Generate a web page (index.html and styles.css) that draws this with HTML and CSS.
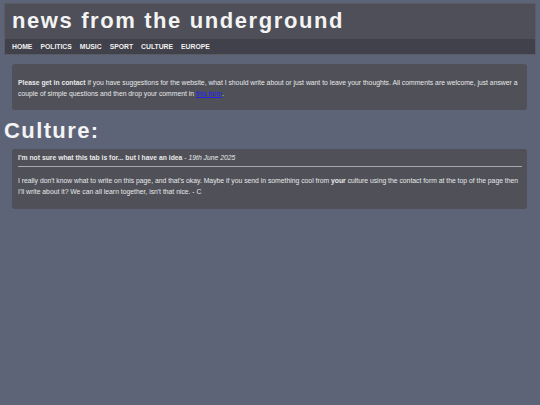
FILE: index.html
```html
<!DOCTYPE html>
<html>
<head>
<meta charset="utf-8">
<link rel="stylesheet" href="styles.css">
</head>
<body>
<header class="masthead">
  <h1 class="site-title">news from the underground</h1>
  <nav class="nav">
    <a class="nav-item" href="#">HOME</a>
    <a class="nav-item" href="#">POLITICS</a>
    <a class="nav-item" href="#">MUSIC</a>
    <a class="nav-item" href="#">SPORT</a>
    <a class="nav-item" href="#">CULTURE</a>
    <a class="nav-item" href="#">EUROPE</a>
  </nav>
</header>
<section class="box contact">
  <p><b>Please get in contact</b> if you have suggestions for the website, what I should write about or just want to leave your thoughts. All comments are welcome, just answer a couple of simple questions and then drop your comment in <a class="link" href="#">this form</a>.</p>
</section>
<h2 class="page-title">Culture:</h2>
<article class="box post">
  <div class="post-head"><b>I'm not sure what this tab is for... but I have an idea</b> - <i>19th June 2025</i></div>
  <hr class="rule">
  <p class="post-body">I really don't know what to write on this page, and that's okay. Maybe if you send in something cool from <b>your</b> culture using the contact form at the top of the page then I'll write about it? We can all learn together, isn't that nice. - C</p>
</article>
</body>
</html>
```
FILE: styles.css
```css
html, body {
  margin: 0;
  padding: 0;
}
body {
  background: #5e6477;
  font-family: "Liberation Sans", Arial, sans-serif;
  color: #ececec;
  padding: 3px 4px;
  min-height: 405px;
  box-sizing: border-box;
}
.masthead {
  background: #4e4f58;
  border: 1px solid #5a5b64;
}
.site-title {
  margin: 0;
  padding: 4px 7px 6px;
  font-size: 22px;
  line-height: 25px;
  letter-spacing: 1.6px;
  font-weight: bold;
  color: #f4f4f4;
}
.nav {
  background: #40414a;
  display: flex;
  gap: 8px;
  padding: 3px 7px;
  height: 9px;
  align-items: center;
}
.nav-item {
  color: #f0f0f0;
  text-decoration: none;
  font-weight: bold;
  font-size: 6.8px;
  line-height: 9px;
}
.box {
  background: #4f5058;
  border-radius: 3px;
  margin: 0 9px 0 8px;
  color: #e8e8e8;
  font-size: 6.8px;
  line-height: 11px;
}
.contact {
  margin-top: 9px;
  padding: 13px 6px 11px;
}
.contact p {
  margin: 0;
}
.link {
  color: #2222ee;
}
.page-title {
  margin: 8px 0 5px;
  font-size: 22px;
  line-height: 26px;
  letter-spacing: 1.4px;
  font-weight: bold;
  color: #f4f4f4;
}
.post {
  padding: 4px 5px 12px 6px;
}
.post-head {
  line-height: 10px;
}
.rule {
  border: 0;
  border-top: 1px solid #a9a9ad;
  margin: 3px 0 8px;
}
.post-body {
  margin: 0;
}
```
